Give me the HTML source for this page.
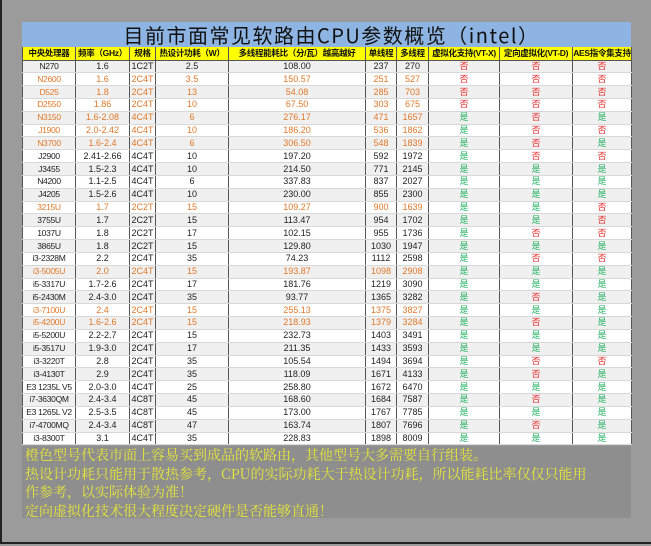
<!DOCTYPE html>
<html><head><meta charset="utf-8"><style>
*{margin:0;padding:0;box-sizing:border-box}
body{width:651px;height:546px;background:#9b9b9b;position:relative;overflow:hidden;font-family:"Liberation Sans","Noto Sans CJK SC",sans-serif}
.frame{position:absolute;left:0;top:0;width:651px;height:544px;border-left:2px solid #222;border-bottom:2px solid #222}
.wrap{position:absolute;left:22px;top:22px;width:609px}
.title{height:25px;background:#8db4e2;text-align:center;font-size:20px;line-height:26px;color:#111;font-family:"Noto Sans CJK SC",sans-serif;letter-spacing:1.5px;padding-left:10px}
table{border-collapse:collapse;table-layout:fixed;width:609px}
td{height:12.83px;font-size:9px;line-height:11px;text-align:center;border-left:1px solid #555;border-right:1px solid #555;border-bottom:1px solid #d8d8d8;color:#222;white-space:nowrap;overflow:hidden;padding:0}
td:first-child{font-size:8.5px;letter-spacing:-0.3px}
tr.h td{background:#ffff00;font-weight:bold;font-size:8.5px;height:13px;border-bottom:1px solid #555;color:#111;letter-spacing:-0.3px}
tr:nth-child(even) td{background:#f0f0f0}
tr:nth-child(odd) td{background:#fff}
tr.h td{background:#ffff00 !important}
tr.o td{color:#e0782a}
.y{color:#22b060 !important}.n{color:#e83030 !important}
.notes{position:absolute;left:22px;top:446px;width:609px;height:72px;background:#8e8e8e;color:#e6e63a;font-family:"Noto Serif CJK SC","Noto Sans CJK SC",serif;font-size:14px;line-height:18.5px;padding:0 0 0 3px;white-space:nowrap}
</style></head><body>
<div class="frame"></div>
<div class="wrap">
<div class="title">目前市面常见软路由CPU参数概览（intel）</div>
<table>
<colgroup><col style="width:53px"><col style="width:54px"><col style="width:26px"><col style="width:73px"><col style="width:137px"><col style="width:31px"><col style="width:32px"><col style="width:71px"><col style="width:73px"><col style="width:59px"></colgroup>
<tr class="h"><td>中央处理器</td><td>频率（GHz）</td><td>规格</td><td>热设计功耗（W）</td><td>多线程能耗比（分/瓦）越高越好</td><td>单线程</td><td>多线程</td><td>虚拟化支持(VT-X)</td><td>定向虚拟化(VT-D)</td><td>AES指令集支持</td></tr>
<tr><td>N270</td><td>1.6</td><td>1C2T</td><td>2.5</td><td>108.00</td><td>237</td><td>270</td><td class="n">否</td><td class="n">否</td><td class="n">否</td></tr>
<tr class="o"><td>N2600</td><td>1.6</td><td>2C4T</td><td>3.5</td><td>150.57</td><td>251</td><td>527</td><td class="n">否</td><td class="n">否</td><td class="n">否</td></tr>
<tr class="o"><td>D525</td><td>1.8</td><td>2C4T</td><td>13</td><td>54.08</td><td>285</td><td>703</td><td class="n">否</td><td class="n">否</td><td class="n">否</td></tr>
<tr class="o"><td>D2550</td><td>1.86</td><td>2C4T</td><td>10</td><td>67.50</td><td>303</td><td>675</td><td class="n">否</td><td class="n">否</td><td class="n">否</td></tr>
<tr class="o"><td>N3150</td><td>1.6-2.08</td><td>4C4T</td><td>6</td><td>276.17</td><td>471</td><td>1657</td><td class="y">是</td><td class="n">否</td><td class="y">是</td></tr>
<tr class="o"><td>J1900</td><td>2.0-2.42</td><td>4C4T</td><td>10</td><td>186.20</td><td>536</td><td>1862</td><td class="y">是</td><td class="n">否</td><td class="n">否</td></tr>
<tr class="o"><td>N3700</td><td>1.6-2.4</td><td>4C4T</td><td>6</td><td>306.50</td><td>548</td><td>1839</td><td class="y">是</td><td class="n">否</td><td class="y">是</td></tr>
<tr><td>J2900</td><td>2.41-2.66</td><td>4C4T</td><td>10</td><td>197.20</td><td>592</td><td>1972</td><td class="y">是</td><td class="n">否</td><td class="n">否</td></tr>
<tr><td>J3455</td><td>1.5-2.3</td><td>4C4T</td><td>10</td><td>214.50</td><td>771</td><td>2145</td><td class="y">是</td><td class="y">是</td><td class="y">是</td></tr>
<tr><td>N4200</td><td>1.1-2.5</td><td>4C4T</td><td>6</td><td>337.83</td><td>837</td><td>2027</td><td class="y">是</td><td class="y">是</td><td class="y">是</td></tr>
<tr><td>J4205</td><td>1.5-2.6</td><td>4C4T</td><td>10</td><td>230.00</td><td>855</td><td>2300</td><td class="y">是</td><td class="y">是</td><td class="y">是</td></tr>
<tr class="o"><td>3215U</td><td>1.7</td><td>2C2T</td><td>15</td><td>109.27</td><td>900</td><td>1639</td><td class="y">是</td><td class="y">是</td><td class="n">否</td></tr>
<tr><td>3755U</td><td>1.7</td><td>2C2T</td><td>15</td><td>113.47</td><td>954</td><td>1702</td><td class="y">是</td><td class="y">是</td><td class="n">否</td></tr>
<tr><td>1037U</td><td>1.8</td><td>2C2T</td><td>17</td><td>102.15</td><td>955</td><td>1736</td><td class="y">是</td><td class="n">否</td><td class="n">否</td></tr>
<tr><td>3865U</td><td>1.8</td><td>2C2T</td><td>15</td><td>129.80</td><td>1030</td><td>1947</td><td class="y">是</td><td class="y">是</td><td class="y">是</td></tr>
<tr><td>i3-2328M</td><td>2.2</td><td>2C4T</td><td>35</td><td>74.23</td><td>1112</td><td>2598</td><td class="y">是</td><td class="n">否</td><td class="n">否</td></tr>
<tr class="o"><td>i3-5005U</td><td>2.0</td><td>2C4T</td><td>15</td><td>193.87</td><td>1098</td><td>2908</td><td class="y">是</td><td class="y">是</td><td class="y">是</td></tr>
<tr><td>i5-3317U</td><td>1.7-2.6</td><td>2C4T</td><td>17</td><td>181.76</td><td>1219</td><td>3090</td><td class="y">是</td><td class="y">是</td><td class="y">是</td></tr>
<tr><td>i5-2430M</td><td>2.4-3.0</td><td>2C4T</td><td>35</td><td>93.77</td><td>1365</td><td>3282</td><td class="y">是</td><td class="n">否</td><td class="y">是</td></tr>
<tr class="o"><td>i3-7100U</td><td>2.4</td><td>2C4T</td><td>15</td><td>255.13</td><td>1375</td><td>3827</td><td class="y">是</td><td class="y">是</td><td class="y">是</td></tr>
<tr class="o"><td>i5-4200U</td><td>1.6-2.6</td><td>2C4T</td><td>15</td><td>218.93</td><td>1379</td><td>3284</td><td class="y">是</td><td class="n">否</td><td class="y">是</td></tr>
<tr><td>i5-5200U</td><td>2.2-2.7</td><td>2C4T</td><td>15</td><td>232.73</td><td>1403</td><td>3491</td><td class="y">是</td><td class="y">是</td><td class="y">是</td></tr>
<tr><td>i5-3517U</td><td>1.9-3.0</td><td>2C4T</td><td>17</td><td>211.35</td><td>1433</td><td>3593</td><td class="y">是</td><td class="y">是</td><td class="y">是</td></tr>
<tr><td>i3-3220T</td><td>2.8</td><td>2C4T</td><td>35</td><td>105.54</td><td>1494</td><td>3694</td><td class="y">是</td><td class="n">否</td><td class="n">否</td></tr>
<tr><td>i3-4130T</td><td>2.9</td><td>2C4T</td><td>35</td><td>118.09</td><td>1671</td><td>4133</td><td class="y">是</td><td class="n">否</td><td class="y">是</td></tr>
<tr><td>E3 1235L V5</td><td>2.0-3.0</td><td>4C4T</td><td>25</td><td>258.80</td><td>1672</td><td>6470</td><td class="y">是</td><td class="y">是</td><td class="y">是</td></tr>
<tr><td>i7-3630QM</td><td>2.4-3.4</td><td>4C8T</td><td>45</td><td>168.60</td><td>1684</td><td>7587</td><td class="y">是</td><td class="n">否</td><td class="y">是</td></tr>
<tr><td>E3 1265L V2</td><td>2.5-3.5</td><td>4C8T</td><td>45</td><td>173.00</td><td>1767</td><td>7785</td><td class="y">是</td><td class="y">是</td><td class="y">是</td></tr>
<tr><td>i7-4700MQ</td><td>2.4-3.4</td><td>4C8T</td><td>47</td><td>163.74</td><td>1807</td><td>7696</td><td class="y">是</td><td class="n">否</td><td class="y">是</td></tr>
<tr><td>i3-8300T</td><td>3.1</td><td>4C4T</td><td>35</td><td>228.83</td><td>1898</td><td>8009</td><td class="y">是</td><td class="y">是</td><td class="y">是</td></tr>
</table>
</div>
<div class="notes">橙色型号代表市面上容易买到成品的软路由，其他型号大多需要自行组装。<br>热设计功耗只能用于散热参考，CPU的实际功耗大于热设计功耗，所以能耗比率仅仅只能用<br>作参考，以实际体验为准！<br>定向虚拟化技术很大程度决定硬件是否能够直通！</div>
</body></html>
